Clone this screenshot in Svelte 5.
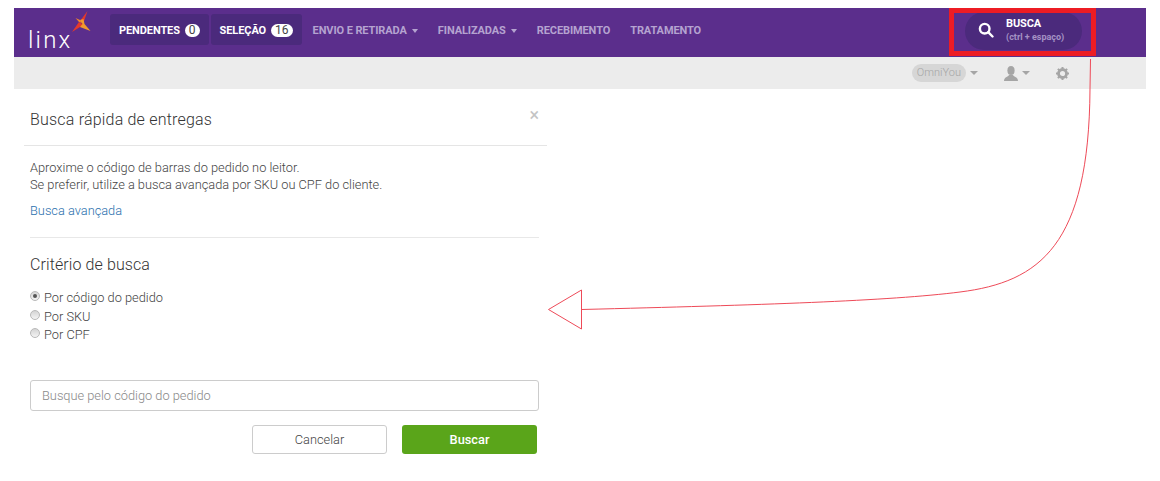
<script>
	const nav = [
		{ label: 'ENVIO E RETIRADA', caret: true },
		{ label: 'FINALIZADAS', caret: true },
		{ label: 'RECEBIMENTO', caret: false },
		{ label: 'TRATAMENTO', caret: false }
	];
	const criteria = ['Por código do pedido', 'Por SKU', 'Por CPF'];
	let selected = $state(criteria[0]);
</script>

<div class="page">
	<header class="topbar">
		<div class="logo">
			<span class="logo-text">linx</span>
			<svg class="logo-star" width="22" height="24" viewBox="0 0 22 24">
				<path d="M16.500 1 L9 11 L12 14 Z" fill="#e5392b" />
				<path d="M4.500 8 L9 10 L11 13 L8 12 Z" fill="#f0842a" />
				<path d="M1 22 L8 12 L13 15 L9 17 Z" fill="#e5392b" />
				<path d="M9 10 L12.500 9 L13.500 14 L19.500 21 L9 17 L11.500 14 Z" fill="#f39a2c" />
			</svg>
		</div>
		<nav class="nav">
			<div class="pill">PENDENTES <span class="badge">0</span></div>
			<div class="pill">SELEÇÃO <span class="badge">16</span></div>
			{#each nav as item}
				<div class="link">{item.label}{#if item.caret}<i class="caret"></i>{/if}</div>
			{/each}
		</nav>
		<div class="search">
			<svg width="16" height="16" viewBox="0 0 16 16" fill="none" stroke="#fff" stroke-width="2.400">
				<circle cx="6.700" cy="6.700" r="4.800" />
				<path d="M10.200 10.200 L14.500 14.500" stroke-linecap="round" />
			</svg>
			<div class="search-text">
				<strong>BUSCA</strong>
				<small>(ctrl + espaço)</small>
			</div>
		</div>
	</header>

	<div class="subbar">
		<span class="store">OmniYou</span>
		<i class="caret grey"></i>
		<svg class="user" width="14" height="15" viewBox="0 0 14 15" fill="#a5a5a5">
			<ellipse cx="7" cy="4.500" rx="3.600" ry="4.500" />
			<path d="M0 15 C0 11 4 11 5 9 H9 C10 11 14 11 14 15 Z" />
		</svg>
		<i class="caret grey"></i>
		<svg class="gear" width="13" height="13" viewBox="0 0 13 13">
			<circle cx="6.500" cy="6.500" r="4" fill="none" stroke="#a5a5a5" stroke-width="2.800" />
			<path d="M6.500 0 V13 M0 6.500 H13 M1.900 1.900 L11.100 11.100 M11.100 1.900 L1.900 11.100" stroke="#a5a5a5" stroke-width="2" stroke-dasharray="2 9 2" />
		</svg>
	</div>

	<section class="modal">
		<div class="modal-head">
			<h2>Busca rápida de entregas</h2>
			<span class="close">×</span>
		</div>
		<div class="modal-body">
			<p>Aproxime o código de barras do pedido no leitor.<br />Se preferir, utilize a busca avançada por SKU ou CPF do cliente.</p>
			<a href="#avancada">Busca avançada</a>
			<hr />
			<h3>Critério de busca</h3>
			<div class="radios">
				{#each criteria as c}
					<label><input type="radio" name="criterio" value={c} bind:group={selected} />{c}</label>
				{/each}
			</div>
			<input class="field" type="text" placeholder="Busque pelo código do pedido" />
			<div class="actions">
				<button class="cancel">Cancelar</button>
				<button class="go">Buscar</button>
			</div>
		</div>
	</section>

	<svg class="annotation" width="1160" height="481" viewBox="0 0 1160 481" fill="none" stroke="#ee4a58" stroke-width="1">
		<path d="M1090.500 59 L1090 89 C1089 245 1040 282 960 292 C890 301 760 305 581.500 309.500" />
		<path d="M581.500 290 L548.500 309.500 L581.500 329 Z" />
	</svg>
</div>

<style>
	:global(body) {
		background: #fff;
	}
	.page {
		padding: 8px 14px 0;
		height: 473px;
		overflow: hidden;
		font-family: Roboto, "Liberation Sans", sans-serif;
		color: #555;
	}
	.topbar {
		height: 49px;
		background: #5b2e8c;
		display: flex;
		align-items: flex-start;
		position: relative;
	}
	.logo {
		width: 96px;
		height: 49px;
		position: relative;
		flex: none;
	}
	.logo-text {
		position: absolute;
		left: 14px;
		top: 20px;
		font-size: 24px;
		line-height: 24px;
		font-weight: 300;
		letter-spacing: 2.200px;
		color: #fff;
	}
	.logo-star {
		position: absolute;
		left: 57px;
		top: 2px;
	}
	.nav {
		display: flex;
		align-items: center;
		font-size: 11px;
		font-weight: 700;
		letter-spacing: -0.100px;
		gap: 2px;
		margin-top: 6px;
	}
	.pill {
		background: #4b2a7c;
		color: #fff;
		height: 31px;
		box-sizing: border-box;
		border-radius: 3px;
		padding: 2px 9px 0;
		display: flex;
		align-items: center;
		gap: 5px;
	}
	.badge {
		background: #fff;
		color: #444;
		border-radius: 8px;
		font-size: 12px;
		font-weight: 400;
		letter-spacing: 0;
		line-height: 13px;
		padding: 0 4px;
	}
	.link {
		color: #b5a3d0;
		height: 31px;
		box-sizing: border-box;
		padding: 2px 9px 0;
		display: flex;
		align-items: center;
	}
	.caret {
		display: inline-block;
		margin-left: 5px;
		border-left: 3.250px solid transparent;
		border-right: 3.250px solid transparent;
		border-top: 4px solid #b5a3d0;
	}
	.search {
		margin-left: auto;
		margin-right: 64px;
		margin-top: 4px;
		width: 117px;
		height: 38px;
		border-radius: 19px;
		background: #4b2a7c;
		display: flex;
		align-items: center;
		gap: 12px;
		padding-left: 13px;
		box-sizing: border-box;
	}
	.search svg {
		margin-top: -2px;
	}
	.search-text {
		display: flex;
		flex-direction: column;
		font-size: 10px;
		line-height: 13px;
		margin-top: -2px;
	}
	.search-text strong {
		color: #fff;
		font-size: 11px;
		letter-spacing: -0.100px;
	}
	.search-text small {
		color: #a592c4;
		font-size: 9px;
		font-weight: 700;
		margin-top: 1px;
	}
	.subbar {
		height: 32px;
		background: #ececec;
		display: flex;
		align-items: center;
		justify-content: flex-end;
		padding-right: 77px;
	}
	.store {
		background: #d6d6d6;
		color: #a5a5a5;
		font-size: 11px;
		font-weight: 300;
		line-height: 18px;
		border-radius: 9px;
		padding: 0 5px;
	}
	.caret.grey {
		border-left-width: 4px;
		border-right-width: 4px;
		border-top-color: #a5a5a5;
		margin-left: 4px;
		margin-right: 26px;
	}
	.modal {
		margin-left: 10px;
		width: 523px;
	}
	.modal-head {
		height: 56px;
		border-bottom: 1px solid #e5e5e5;
		position: relative;
		padding-left: 6px;
	}
	h2 {
		margin: 0;
		padding-top: 21px;
		font-size: 16px;
		line-height: 20px;
		font-weight: 300;
		letter-spacing: 0.200px;
		color: #333;
	}
	.close {
		position: absolute;
		right: 8px;
		top: 16px;
		font-size: 18px;
		line-height: 20px;
		color: #c4c4c4;
	}
	.modal-body {
		padding: 13px 8px 0 6px;
		font-size: 12.800px;
		font-weight: 300;
	}
	p {
		margin: 0;
		line-height: 17px;
		color: #444;
	}
	a {
		display: block;
		margin-top: 9px;
		line-height: 17px;
		color: #2a70ad;
		text-decoration: none;
	}
	hr {
		border: 0;
		border-top: 1px solid #e8e8e8;
		margin: 18px 0 0;
	}
	h3 {
		margin: 17px 0 0;
		font-size: 16px;
		line-height: 20px;
		font-weight: 300;
		letter-spacing: 0.100px;
		color: #333;
	}
	.radios {
		margin-top: 13.500px;
		display: flex;
		flex-direction: column;
	}
	label {
		display: flex;
		align-items: center;
		height: 18.500px;
		color: #444;
	}
	label input {
		appearance: none;
		width: 10px;
		height: 10px;
		margin: 0 4px 3px 0;
		border: 1px solid #b9b9b9;
		border-radius: 50%;
		box-sizing: border-box;
		background: linear-gradient(#d4d4d4, #f4f4f4);
		position: relative;
	}
	label input:checked::after {
		content: "";
		position: absolute;
		left: 2px;
		top: 2px;
		width: 4px;
		height: 4px;
		border-radius: 50%;
		background: #555;
	}
	.field {
		display: block;
		margin-top: 35.500px;
		width: 100%;
		height: 31px;
		box-sizing: border-box;
		border: 1px solid #ccc;
		border-radius: 3px;
		padding: 0 11px;
		font: inherit;
		outline: none;
	}
	.field::placeholder {
		color: #888;
	}
	.actions {
		display: flex;
		justify-content: flex-end;
		gap: 15px;
		margin-top: 14px;
		padding-right: 2px;
	}
	button {
		width: 135px;
		height: 29px;
		border-radius: 3px;
		font: inherit;
		padding: 0;
	}
	.cancel {
		background: #fff;
		border: 1px solid #ccc;
		color: #444;
	}
	.go {
		background: #5aa51a;
		border: 0;
		color: #fff;
		font-weight: 500;
	}
	.annotation {
		position: absolute;
		left: 0;
		top: 0;
		pointer-events: none;
	}
	.topbar::after {
		content: "";
		position: absolute;
		left: 935px;
		top: 0;
		width: 147px;
		height: 48px;
		box-sizing: border-box;
		border: 5px solid #ed1c24;
	}
</style>
